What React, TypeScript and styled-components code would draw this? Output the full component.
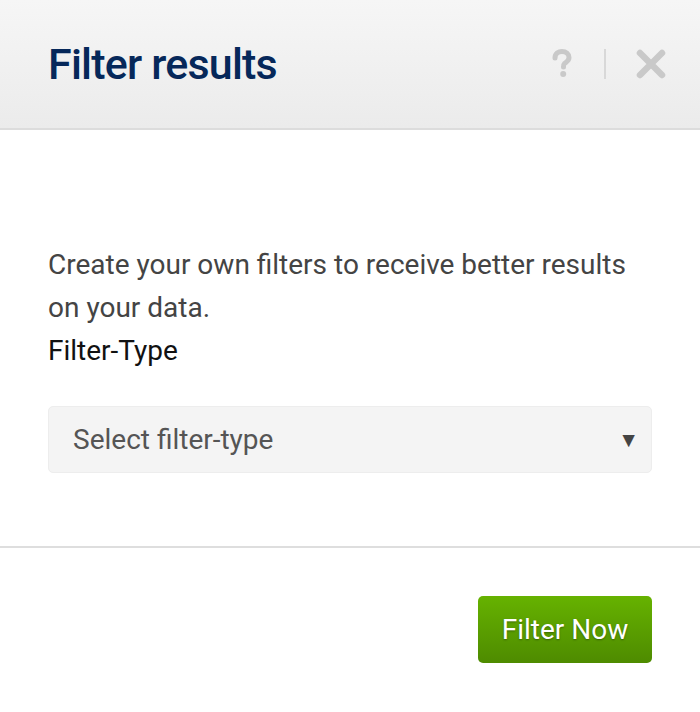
import React from 'react';
import styled, { createGlobalStyle } from 'styled-components';

const GlobalStyle = createGlobalStyle`
  html, body {
    margin: 0;
    padding: 0;
    background: #ffffff;
  }
  body {
    font-family: Roboto, "Liberation Sans", Arial, sans-serif;
  }
`;

const Dialog = styled.div`
  width: 700px;
  height: 712px;
  display: flex;
  flex-direction: column;
  background: #fff;
  overflow: hidden;
`;

const Header = styled.header`
  height: 128px;
  display: flex;
  align-items: center;
  justify-content: space-between;
  padding: 0 34px 0 48px;
  background: linear-gradient(to bottom, #f6f6f6 0%, #ebebeb 100%);
  border-bottom: 2px solid #dcdcdc;
  box-sizing: content-box;
`;

const Title = styled.h1`
  margin: 0;
  font-family: Roboto, "Liberation Sans", sans-serif;
  font-weight: 500;
  font-size: 43px;
  letter-spacing: -0.8px;
  color: #06285a;
`;

const Tools = styled.div`
  display: flex;
  align-items: center;
`;

const ToolButton = styled.button`
  border: none;
  background: none;
  padding: 0;
  display: flex;
  align-items: center;
  justify-content: center;
  cursor: pointer;
`;

const Separator = styled.span`
  width: 2px;
  height: 30px;
  background: #d8d8d8;
  margin: 0 30px 0 32px;
`;

const Body = styled.main`
  padding: 113px 48px 73px;
  border-bottom: 2px solid #dedede;
`;

const Intro = styled.p`
  margin: 0;
  font-size: 28px;
  line-height: 43px;
  color: #444;
`;

const Label = styled.label`
  display: block;
  font-size: 28px;
  line-height: 34px;
  color: #111;
  margin-top: 5px;
  margin-bottom: 38px;
`;

const SelectWrap = styled.div`
  position: relative;
  height: 67px;
  border-radius: 5px;
  background: #f4f4f4;
  border: 1px solid #ededed;
  box-sizing: border-box;
  display: flex;
  align-items: center;
  padding: 0 24px;
  font-size: 28px;
  color: #555;
`;

const Arrow = styled.span`
  position: absolute;
  right: 12px;
  top: 50%;
  transform: translateY(-50%);
  font-size: 21px;
  color: #444;
`;

const Footer = styled.footer`
  display: flex;
  justify-content: flex-end;
  padding: 48px 48px;
`;

const PrimaryButton = styled.button`
  width: 174px;
  height: 67px;
  border: none;
  border-radius: 5px;
  background: linear-gradient(to bottom, #66b200 0%, #4e8b00 100%);
  color: #fff;
  font-family: Roboto, "Liberation Sans", sans-serif;
  font-size: 28px;
  text-shadow: 0 1px 2px rgba(0, 0, 0, 0.35);
  cursor: pointer;
`;

const HelpIcon = () => (
  <svg width="20" height="30" viewBox="0 0 20 30">
    <path
      d="M3 9 C3 4.5 6.5 2.5 10 2.5 C14 2.5 17 5 17 8.5 C17 12 14 13 12.5 14.5 C11.5 15.5 11.5 16.5 11.5 18"
      fill="none"
      stroke="#c9c9c9"
      strokeWidth="5"
      strokeLinecap="round"
    />
    <circle cx="11.2" cy="25" r="3" fill="#c9c9c9" />
  </svg>
);

const CloseIcon = () => (
  <svg width="30" height="30" viewBox="0 0 30 30">
    <path d="M4 4 L26 26 M26 4 L4 26" stroke="#c9c9c9" strokeWidth="6.5" strokeLinecap="round" />
  </svg>
);

const App: React.FC = () => {
  return (
    <>
      <GlobalStyle />
      <Dialog>
        <Header>
          <Title>Filter results</Title>
          <Tools>
            <ToolButton aria-label="Help">
              <HelpIcon />
            </ToolButton>
            <Separator />
            <ToolButton aria-label="Close">
              <CloseIcon />
            </ToolButton>
          </Tools>
        </Header>
        <Body>
          <Intro>Create your own filters to receive better results on your data.</Intro>
          <Label>Filter-Type</Label>
          <SelectWrap>
            Select filter-type
            <Arrow>▼</Arrow>
          </SelectWrap>
        </Body>
        <Footer>
          <PrimaryButton>Filter Now</PrimaryButton>
        </Footer>
      </Dialog>
    </>
  );
};

export default App;
